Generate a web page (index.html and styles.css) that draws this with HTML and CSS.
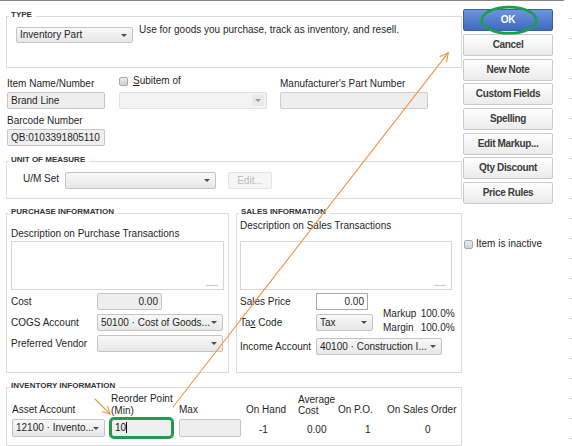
FILE: index.html
```html
<!DOCTYPE html>
<html lang="en">
<head>
<meta charset="utf-8">
<title>Edit Item</title>
<link rel="stylesheet" href="styles.css">
</head>
<body>
<div class="page">
  <div class="window">
    <div class="form">

      <fieldset class="group group-type">
        <legend>Type</legend>
        <div class="type-row">
          <div class="select select-type"><span class="value">Inventory Part</span><span class="caret"></span></div>
          <p class="type-note">Use for goods you purchase, track as inventory, and resell.</p>
        </div>
      </fieldset>

      <div class="ident">
        <div class="ident-col col-name">
          <div class="lbl">Item Name/Number</div>
          <div class="input">Brand Line</div>
          <div class="lbl lbl-barcode">Barcode Number</div>
          <div class="input">QB:0103391805110</div>
        </div>
        <div class="ident-col col-sub">
          <div class="check"><span class="box"></span><span><u>S</u>ubitem of</span></div>
          <div class="select is-disabled"><span class="value"></span><span class="caret-well"><span class="caret"></span></span></div>
        </div>
        <div class="ident-col col-mfr">
          <div class="lbl">Manufacturer's Part Number</div>
          <div class="input"></div>
        </div>
      </div>

      <fieldset class="group group-uom">
        <legend>Unit of Measure</legend>
        <div class="uom-row">
          <span class="uom-label">U/M Set</span>
          <div class="select select-uom"><span class="value"></span><span class="caret"></span></div>
          <div class="btn-edit">Edit...</div>
        </div>
      </fieldset>

      <div class="info-row">
        <fieldset class="group group-purchase">
          <legend>Purchase Information</legend>
          <div class="desc-label">Description on Purchase Transactions</div>
          <div class="textarea"><span class="grip"></span></div>
          <div class="rows rows-purchase">
            <span class="row-label">Cost</span>
            <div class="input num cost">0.00</div>
            <span class="row-label">COGS Account</span>
            <div class="select"><span class="value">50100 · Cost of Goods...</span><span class="caret"></span></div>
            <span class="row-label">Preferred Vendor</span>
            <div class="select"><span class="value"></span><span class="caret"></span></div>
          </div>
        </fieldset>

        <fieldset class="group group-sales">
          <legend>Sales Information</legend>
          <div class="desc-label">Description on Sales Transactions</div>
          <div class="textarea"><span class="grip"></span></div>
          <div class="rows rows-sales">
            <span class="row-label">Sales Price</span>
            <div class="input num price">0.00</div>
            <span class="row-label">Ta<u>x</u> Code</span>
            <div class="select select-tax"><span class="value">Tax</span><span class="caret"></span></div>
            <div class="markup">
              <span>Markup</span><span>100.0%</span>
              <span>Margin</span><span>100.0%</span>
            </div>
            <span class="row-label">Income Account</span>
            <div class="select select-income"><span class="value">40100 · Construction I...</span><span class="caret"></span></div>
          </div>
        </fieldset>
      </div>

      <fieldset class="group group-inventory">
        <legend>Inventory Information</legend>
        <div class="inv-grid">
          <div class="inv-head">Asset Account</div>
          <div class="inv-head inv-head-two">Reorder Point<br>(Min)</div>
          <div class="inv-head">Max</div>
          <div class="inv-head">On Hand</div>
          <div class="inv-head inv-head-avg">Average<br>Cost</div>
          <div class="inv-head">On P.O.</div>
          <div class="inv-head">On Sales Order</div>

          <div class="select select-asset"><span class="value">12100 · Invento...</span><span class="caret"></span></div>
          <div class="input reorder">10<span class="cursor"></span></div>
          <div class="input max"></div>
          <div class="inv-value v-hand">-1</div>
          <div class="inv-value v-avg">0.00</div>
          <div class="inv-value v-po">1</div>
          <div class="inv-value v-so">0</div>
        </div>
      </fieldset>
    </div>

    <aside class="actions">
      <div class="btn btn-primary">OK</div>
      <div class="btn">Cancel</div>
      <div class="btn">New Note</div>
      <div class="btn">Custom Fields</div>
      <div class="btn">Spellin<u>g</u></div>
      <div class="btn">Edit Markup...</div>
      <div class="btn">Qty Discount</div>
      <div class="btn">Price Rules</div>
      <div class="check inactive"><span class="box"></span><span>Item is inactive</span></div>
    </aside>
  </div>
  <div class="ruler"></div>
</div>

<svg class="marks" width="572" height="446" viewBox="0 0 572 446" aria-hidden="true">
  <ellipse cx="509" cy="20.2" rx="27.3" ry="13" fill="none" stroke="#1c9e4a" stroke-width="2.8"/>
  <g fill="none" stroke="#f59443" stroke-width="1.1" stroke-linecap="round" stroke-linejoin="round">
    <path d="M173 407 L448.3 52.7"/>
    <path d="M440.1 56.4 L448.3 52.7 L446.8 61.6"/>
    <path d="M95 399 L110 414"/>
    <path d="M107.7 406.4 L110 414 L102.4 411.7"/>
  </g>
</svg>
</body>
</html>
```

FILE: styles.css
```css
* { box-sizing: border-box; }

html, body { margin: 0; padding: 0; }

body {
  position: relative;
  width: 572px;
  height: 446px;
  overflow: hidden;
  background: #fff;
  color: #1f1f1f;
  font: 10px/12px "Liberation Sans", Arial, sans-serif;
}

.page { display: flex; height: 446px; }

.window {
  display: flex;
  align-items: flex-start;
  width: 564px;
  height: 446px;
  padding-left: 6px;
  border-top: 1px solid #858585;
}

/* dotted guide along the right edge */
.ruler {
  width: 2px;
  height: 446px;
  margin-left: 6px;
  background: repeating-linear-gradient(to bottom, transparent 0 18px, #c6c6c6 18px 19px, transparent 19px 20px);
}

.form { width: 456px; display: flex; flex-direction: column; }

/* ---------- grouped sections ---------- */
.group {
  margin: 0;
  padding: 0;
  min-width: 0;
  border: 1px solid #dcdcdc;
}
.group > legend {
  margin-left: 2px;
  padding: 0 4px 3px 2px;
  font: bold 8px/10px "Liberation Sans", Arial, sans-serif;
  color: #333;
  text-transform: uppercase;
}

/* ---------- shared controls ---------- */
.input {
  height: 17px;
  padding: 0 3px;
  line-height: 15px;
  border: 1px solid #c6c6c6;
  border-radius: 2px;
  background: #eeeeee;
  white-space: nowrap;
  overflow: hidden;
}
.input.num { text-align: right; }

.select {
  display: flex;
  align-items: center;
  height: 17px;
  padding: 0 5px 0 3px;
  border: 1px solid #c4c4c4;
  border-radius: 2px;
  background: linear-gradient(#f8f8f8, #e7e7e7);
  white-space: nowrap;
  overflow: hidden;
  color: #1f1f1f;
}
.select .value { flex: 1; overflow: hidden; }
.caret {
  width: 0;
  height: 0;
  border-left: 3.5px solid transparent;
  border-right: 3.5px solid transparent;
  border-top: 3.5px solid #4d4d4d;
}
.select.is-disabled {
  background: #f3f3f3;
  border-color: #e2e2e2;
  padding-right: 2px;
}
.caret-well {
  display: flex;
  align-items: center;
  justify-content: center;
  width: 12px;
  height: 11px;
  background: #e9e9e9;
}
.is-disabled .caret { border-top-color: #9a9a9a; }

.check { display: flex; align-items: center; gap: 5px; height: 12px; white-space: nowrap; }
.box {
  flex: none;
  width: 9px;
  height: 9px;
  border: 1px solid #a8a8a8;
  border-radius: 2px;
  background: linear-gradient(#e9e9e9, #d2d2d2);
}

.textarea {
  position: relative;
  height: 49px;
  border: 1px solid #d6d6d6;
  background: #fff;
}
.grip {
  position: absolute;
  right: 5px;
  bottom: 3px;
  width: 12px;
  height: 1px;
  background: #c9c9c9;
}

/* ---------- type ---------- */
.group-type { margin-top: 9px; height: 58px; }
.type-row { display: flex; align-items: flex-start; padding: 4px 0 0 9px; }
.select-type { width: 117px; height: 16px; }
.type-note { margin: -3px 0 0 6px; white-space: nowrap; }

/* ---------- name / barcode ---------- */
.ident { display: flex; align-items: flex-start; }
.ident-col { display: flex; flex-direction: column; }
.col-name { width: 98px; margin-left: 1px; padding-top: 10px; }
.col-sub { width: 148px; margin-left: 14px; padding-top: 7px; }
.col-sub .select { margin-top: 5px; }
.col-mfr { width: 148px; margin-left: 13px; padding-top: 10px; }
.lbl { height: 12px; white-space: nowrap; }
.lbl + .input { margin-top: 2px; }
.lbl-barcode { margin-top: 6px; }
.col-mfr .input { border-color: #cdcdcd; }

/* ---------- unit of measure ---------- */
.group-uom { margin-top: 9px; height: 44px; }
.uom-row { display: flex; align-items: flex-start; padding: 4px 0 0 16px; }
.uom-label { width: 42px; line-height: 14px; }
.select-uom { width: 151px; }
.btn-edit {
  width: 44px;
  height: 17px;
  margin-left: 12px;
  border: 1px solid #e4e4e4;
  border-radius: 2px;
  background: #f6f6f6;
  color: #b9b9b9;
  line-height: 15px;
  text-align: center;
}

/* ---------- purchase / sales ---------- */
.info-row { display: flex; gap: 7px; margin-top: 8px; }
.group-purchase { width: 223px; height: 166px; }
.group-sales { width: 226px; height: 166px; }

.desc-label { white-space: nowrap; }
.group-purchase .desc-label { margin: 8px 0 0 4px; }
.group-purchase .textarea { margin: 1px 4px 0 4px; }
.group-sales .desc-label { margin: 0 0 0 3px; }
.group-sales .textarea { margin: 9px 9px 0 3px; }

.rows { display: grid; align-items: end; margin-top: 3px; }
.row-label { height: 17px; line-height: 17px; white-space: nowrap; }
.rows-purchase {
  margin-left: 4px;
  grid-template-columns: 86px 126px;
  grid-template-rows: 17px 21px 21px;
}
.cost { width: 65px; }

.rows-sales {
  margin-left: 3px;
  grid-template-columns: 76px 57px 1fr;
  grid-template-rows: 17px 21px 24px;
}
.price {
  width: 52px;
  background: #fff;
  border-color: #a9a9a9;
  border-radius: 0;
}
.select-tax { width: 57px; }
.markup {
  grid-column: 3;
  grid-row: 1 / 3;
  align-self: end;
  display: grid;
  grid-template-columns: 37.7px auto;
  margin: 0 0 -4px 10px;
  line-height: 14px;
  white-space: nowrap;
}
.select-income { grid-column: 2 / 4; width: 126px; }

/* ---------- inventory ---------- */
.group-inventory { margin-top: 8px; height: 65px; }
.inv-grid {
  display: grid;
  grid-template-columns: 99px 68px 67px 52px 40px 49px auto;
  grid-template-rows: auto 18px;
  row-gap: 3px;
  align-items: end;
  margin: -1px 0 0 5px;
}
.inv-head { white-space: nowrap; }
.inv-head-two { line-height: 11.5px; }
.inv-head-avg { line-height: 10.5px; }
.select-asset { width: 93px; height: 18px; }
.reorder {
  width: 61px;
  height: 18px;
  line-height: 16px;
  border: 1px solid #1f9d4c;
  border-radius: 3px;
  background: #efefef;
  box-shadow: 0 0 0 2px #1f9d4c;
  color: #111;
}
.cursor {
  display: inline-block;
  width: 1px;
  height: 11px;
  margin-left: 0;
  vertical-align: -2px;
  background: #000;
}
.max { width: 62px; height: 18px; }
.inv-value { height: 18px; padding-top: 2px; line-height: 18px; }
.v-hand { padding-left: 13px; }
.v-avg { padding-left: 9px; }
.v-po { padding-left: 27px; }
.v-so { padding-left: 38px; }

/* ---------- action buttons ---------- */
.actions {
  width: 90px;
  margin-left: 1px;
  padding-top: 8.3px;
  display: flex;
  flex-direction: column;
  gap: 2.7px;
}
.btn {
  height: 22px;
  border: 1px solid #c9c9c9;
  border-radius: 2px;
  background: linear-gradient(#ffffff, #ebebeb);
  color: #3b3b3b;
  font: bold 10px/20px "Liberation Sans", Arial, sans-serif;
  letter-spacing: -0.35px;
  text-align: center;
  white-space: nowrap;
}
.btn-primary {
  border-color: #3a61a6;
  background: linear-gradient(#6c96dc, #3e69bf);
  color: #fff;
}
.inactive { margin: 31.5px 0 0 1px; gap: 3px; }

/* ---------- annotation layer ---------- */
.marks {
  position: absolute;
  left: 0;
  top: 0;
  pointer-events: none;
}
```
